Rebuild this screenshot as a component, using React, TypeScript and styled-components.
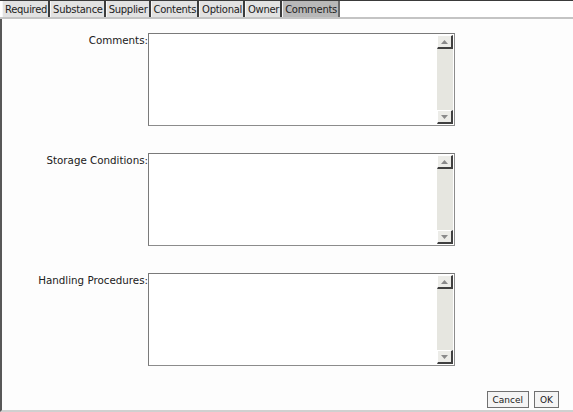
import styled, { createGlobalStyle } from 'styled-components';

const GlobalStyle = createGlobalStyle`
  html, body {
    margin: 0;
    padding: 0;
    background: #ffffff;
  }
  body {
    font-family: 'DejaVu Sans', Verdana, sans-serif;
  }
`;

const Frame = styled.div`
  display: flex;
  flex-direction: column;
  width: 573px;
  height: 412px;
  box-sizing: border-box;
  border-top: 1px solid #3a3a3a;
  background: #fdfdfd;
`;

const TabBar = styled.div`
  display: flex;
  height: 16px;
  padding-left: 2px;
  border-bottom: 2px solid #c4c4c4;
  background: #ffffff;
`;

const Tab = styled.div<{ $active?: boolean }>`
  display: flex;
  align-items: center;
  padding: 0 1px 0 2px;
  font-size: 10px;
  letter-spacing: -0.3px;
  color: #222;
  background: ${(p) => (p.$active ? '#b8b8b8' : '#e2e2e2')};
  border-left: 1px solid #f6f6f6;
  border-right: 2px solid ${(p) => (p.$active ? '#6a6a6a' : '#3c3c3c')};
  white-space: nowrap;
`;

const Panel = styled.div`
  flex: 1;
  display: flex;
  flex-direction: column;
  border-left: 2px solid #585858;
  border-bottom: 2px solid #d0d0d0;
`;

const Form = styled.div`
  display: flex;
  flex-direction: column;
  gap: 27px;
  padding-top: 14px;
`;

const Row = styled.div`
  display: flex;
  align-items: flex-start;
`;

const Label = styled.label`
  width: 146px;
  text-align: right;
  font-size: 10.3px;
  color: #202020;
  padding-top: 1px;
  line-height: 13px;
`;

const AreaBox = styled.div`
  display: flex;
  width: 307px;
  height: 93px;
  box-sizing: border-box;
  border: 1px solid #8c8c8c;
  border-top-color: #7a7a7a;
  border-left-color: #7a7a7a;
  background: #ffffff;
`;

const Area = styled.textarea`
  flex: 1;
  border: none;
  outline: none;
  resize: none;
  overflow: hidden;
  padding: 2px;
  background: transparent;
  font-family: 'DejaVu Sans', sans-serif;
  font-size: 10px;
`;

const ScrollBar = styled.div`
  display: flex;
  flex-direction: column;
  width: 16px;
  margin: 1px 1px 1px 0;
  background: #e6e6e0;
`;

const Track = styled.div`
  flex: 1;
`;

const ArrowButton = styled.div`
  display: flex;
  align-items: center;
  justify-content: center;
  height: 14px;
  box-sizing: border-box;
  background: #ecece8;
  border-top: 1px solid #ffffff;
  border-left: 1px solid #ffffff;
  border-right: 2px solid #404040;
  border-bottom: 2px solid #404040;
`;

const Footer = styled.div`
  display: flex;
  justify-content: flex-end;
  gap: 5px;
  margin-top: auto;
  padding: 0 14px 2px 0;
`;

const Button = styled.button`
  height: 17px;
  padding: 0 5px;
  font-family: 'DejaVu Sans', sans-serif;
  font-size: 9px;
  color: #202020;
  background: #f4f4f4;
  border: 1px solid #707070;
  border-radius: 0;
`;

const Arrow = ({ up }: { up?: boolean }) => (
  <svg width="7" height="4" viewBox="0 0 7 4">
    <polygon points={up ? '3.5,0 7,4 0,4' : '0,0 7,0 3.5,4'} fill="#8a8a8a" />
  </svg>
);

const tabs = ['Required', 'Substance', 'Supplier', 'Contents', 'Optional', 'Owner', 'Comments'];
const fields = ['Comments:', 'Storage Conditions:', 'Handling Procedures:'];

const App = () => {
  return (
    <>
      <GlobalStyle />
      <Frame>
        <TabBar>
          {tabs.map((t) => (
            <Tab key={t} $active={t === 'Comments'}>
              {t}
            </Tab>
          ))}
        </TabBar>
        <Panel>
          <Form>
            {fields.map((f) => (
              <Row key={f}>
                <Label>{f}</Label>
                <AreaBox>
                  <Area />
                  <ScrollBar>
                    <ArrowButton>
                      <Arrow up />
                    </ArrowButton>
                    <Track />
                    <ArrowButton>
                      <Arrow />
                    </ArrowButton>
                  </ScrollBar>
                </AreaBox>
              </Row>
            ))}
          </Form>
          <Footer>
            <Button>Cancel</Button>
            <Button>OK</Button>
          </Footer>
        </Panel>
      </Frame>
    </>
  );
};

export default App;
